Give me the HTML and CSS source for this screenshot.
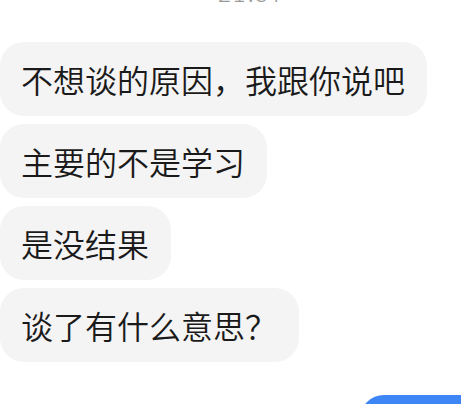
FILE: index.html
```html
<!DOCTYPE html>
<html lang="zh">
<head>
<meta charset="utf-8">
<link rel="stylesheet" href="styles.css">
</head>
<body>
<div class="chat">
  <div class="time">21:57</div>
  <div class="list">
    <div class="bubble">不想谈的原因，我跟你说吧</div>
    <div class="bubble">主要的不是学习</div>
    <div class="bubble">是没结果</div>
    <div class="bubble">谈了有什么意思？</div>
  </div>
  <div class="mine-row"><div class="mine"></div></div>
</div>
</body>
</html>
```
FILE: styles.css
```css
html, body {
  margin: 0;
  padding: 0;
  background: #ffffff;
  overflow: hidden;
}
body {
  width: 461px;
  height: 404px;
  font-family: "Noto Sans CJK SC", "Noto Sans", sans-serif;
}
.chat {
  display: flex;
  flex-direction: column;
}
.time {
  margin-top: -22px;
  height: 28px;
  line-height: 28px;
  font-size: 24px;
  font-weight: 300;
  color: #9a9a9a;
  padding-left: 218px;
  letter-spacing: 2px;
}
.list {
  margin-top: 36px;
  display: flex;
  flex-direction: column;
  align-items: flex-start;
  gap: 8px;
}
.bubble {
  background: #f4f4f4;
  color: #1a1a1a;
  font-size: 32px;
  font-weight: 350;
  line-height: 42px;
  padding: 16px 22px 16px 21px;
  border-radius: 24px;
}
.mine-row {
  margin-top: 33px;
  display: flex;
  justify-content: flex-end;
}
.mine {
  background: #3e86f5;
  width: 101px;
  height: 74px;
  border-radius: 24px 0 0 24px;
}
```
